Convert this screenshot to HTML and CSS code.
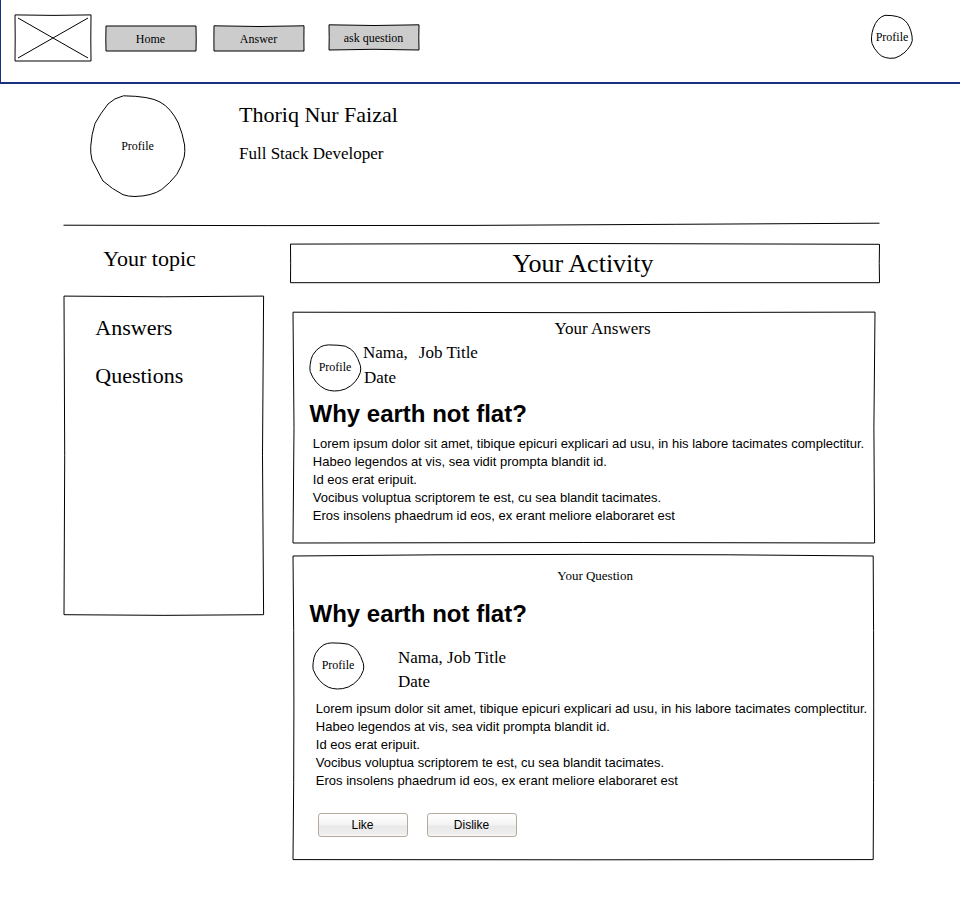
FILE: index.html
```html
<!DOCTYPE html>
<html lang="en">
<head>
<meta charset="utf-8">
<title>Profile</title>
<link rel="stylesheet" href="styles.css">
</head>
<body>
<header class="topbar">
  <svg class="logo" viewBox="0 0 78 48"><path d="M1 .9Q39 1.9 77 .9Q76.6 24 77 47H1Q1.4 24 1 .9ZM4 4L74 44M74 4L4 44"/></svg>
  <nav class="nav">
    <a class="nav-item"><svg class="frame" viewBox="0 0 92 28"><path d="M1 1H91Q91.4 14 91 26H1Q.6 14 1 1Z"/></svg><span>Home</span></a>
    <a class="nav-item"><svg class="frame" viewBox="0 0 92 28"><path d="M1 .8Q46 2.2 91 .8Q90.8 14 91 26H1Q.8 14 1 .8Z"/></svg><span>Answer</span></a>
    <a class="nav-item ask"><svg class="frame" viewBox="0 0 92 28"><path d="M1 .8Q46 2.2 91 .8Q90.6 14 91 26Q46 24.6 1 26Q1.4 14 1 .8Z"/></svg><span>ask question</span></a>
  </nav>
  <div class="avatar avatar-nav"><svg class="frame" viewBox="0 0 44 46"><path d="M15 1.3Q30 1.2 35 6.7Q40 11 42 22Q43.2 27 40.7 31Q35 40.5 25 44Q14 45.5 8.3 39.3Q3.5 34 2 29.3Q.5 23 3.3 14.3Q7 3.5 15 1.3Z"/></svg><span>Profile</span></div>
</header>
<main class="page">
  <section class="profile">
    <div class="avatar avatar-large"><svg class="frame" viewBox="0 0 96 103"><path d="M33.5 .8Q60 1.2 70 7Q81 13 88.3 28Q92.5 38 94.6 50Q95.2 57 94.2 62Q92 71 86.7 79.5Q80 88 71.7 94.5Q62 101 45 101.5Q38 101.5 33 99.7Q22 94 13 86L11.5 83.3L2 65Q.3 58 .7 51.5Q1.5 39 5 28.5Q10 19 18 9Q24 3 33.5 .8Z"/></svg><span>Profile</span></div>
    <div class="profile-info">
      <h1 class="name">Thoriq Nur Faizal</h1>
      <p class="role">Full Stack Developer</p>
    </div>
  </section>
  <svg class="divider" viewBox="0 0 817 5"><path d="M.5 3.2Q205 3.9 409 3.4Q613 2.3 816.5 1.2"/></svg>
  <div class="columns">
    <aside class="sidebar">
      <h2 class="sidebar-title">Your topic</h2>
      <div class="topics">
        <svg class="frame" viewBox="0 0 202 322"><path d="M1 1.1Q101 2.4 200.6 1.1Q198.4 160 200.6 319.7Q101 321 1 319.7Q2.4 160 1 1.1Z"/></svg>
        <a class="topic">Answers</a>
        <a class="topic">Questions</a>
      </div>
    </aside>
    <div class="feed">
      <div class="feed-title"><svg class="frame" viewBox="0 0 590 41"><path d="M.5 1.1Q295 -.2 589.5 1.3Q589 20 589.5 39.7H.5Q.8 20 .5 1.1Z"/></svg><h2>Your Activity</h2></div>
      <article class="card answers">
        <svg class="frame" viewBox="0 0 584 233"><path d="M1 1.2Q292 2.2 583 1.1Q581 116 582.6 232Q292 231 1 232Q3 116 1 1.2Z"/></svg>
        <h3 class="card-label">Your Answers</h3>
        <div class="author">
          <div class="avatar"><svg class="frame" viewBox="0 0 53 48"><path d="M19.7 .9Q30 .9 36.3 2.2Q42 4.5 45.3 8.5Q49 14 51.3 21.3Q52.2 25 51.3 28.5Q49.5 33.5 46.3 37.5Q42 42.5 36.3 45Q30.5 47.2 25.3 47Q20 46.8 16.3 45.2Q11 42.5 7.3 38.2Q3 33 1.2 27.5Q.6 24 1.2 20.5Q1.8 15 3.6 11.3Q7 5.5 12 2.6Q15.5 1 19.7 .9Z"/></svg><span>Profile</span></div>
          <div class="author-info"><p class="author-line"><span>Nama,</span><span>Job Title</span></p><p class="date">Date</p></div>
        </div>
        <h2 class="question">Why earth not flat?</h2>
        <p class="body">Lorem ipsum dolor sit amet, tibique epicuri explicari ad usu, in his labore tacimates complectitur.<br>Habeo legendos at vis, sea vidit prompta blandit id.<br>Id eos erat eripuit.<br>Vocibus voluptua scriptorem te est, cu sea blandit tacimates.<br>Eros insolens phaedrum id eos, ex erant meliore elaboraret est</p>
      </article>
      <article class="card asked">
        <svg class="frame" viewBox="0 0 584 307"><path d="M1 2Q291 -1.2 581.2 2Q582.2 150 581.2 305.6Q291 306 1 305.6Q2.8 150 1 2Z"/></svg>
        <h3 class="card-label">Your Question</h3>
        <h2 class="question">Why earth not flat?</h2>
        <div class="author">
          <div class="avatar"><svg class="frame" viewBox="0 0 53 48"><path d="M19.7 .9Q30 .9 36.3 2.2Q42 4.5 45.3 8.5Q49 14 51.3 21.3Q52.2 25 51.3 28.5Q49.5 33.5 46.3 37.5Q42 42.5 36.3 45Q30.5 47.2 25.3 47Q20 46.8 16.3 45.2Q11 42.5 7.3 38.2Q3 33 1.2 27.5Q.6 24 1.2 20.5Q1.8 15 3.6 11.3Q7 5.5 12 2.6Q15.5 1 19.7 .9Z"/></svg><span>Profile</span></div>
          <div class="author-info"><p>Nama, Job Title</p><p>Date</p></div>
        </div>
        <p class="body">Lorem ipsum dolor sit amet, tibique epicuri explicari ad usu, in his labore tacimates complectitur.<br>Habeo legendos at vis, sea vidit prompta blandit id.<br>Id eos erat eripuit.<br>Vocibus voluptua scriptorem te est, cu sea blandit tacimates.<br>Eros insolens phaedrum id eos, ex erant meliore elaboraret est</p>
        <div class="actions"><button class="vote">Like</button><button class="vote">Dislike</button></div>
      </article>
    </div>
  </div>
</main>
</body>
</html>
```
FILE: styles.css
```css
* { box-sizing: border-box; }

body {
  margin: 0;
  background: #fff;
  color: #000;
  font-family: "Liberation Serif", serif;
}

h1, h2, h3, p { margin: 0; font-weight: normal; }

svg { fill: none; stroke: #000; stroke-width: 1; display: block; }

/* Hand-drawn outline laid behind a box's content */
.frame {
  position: absolute;
  inset: 0;
  width: 100%;
  height: 100%;
  overflow: visible;
  z-index: -1;
}

.topbar {
  display: flex;
  align-items: flex-start;
  height: 84px;
  padding: 14px 46px 0 13px;
  border-left: 1px solid #18307f;
  border-bottom: 2px solid #18307f;
}

.logo { width: 78px; height: 48px; }

.nav { display: flex; gap: 16px; margin: 11px 0 0 13px; }

.nav-item {
  position: relative;
  z-index: 0;
  width: 92px;
  height: 28px;
  padding-right: 1px;
  line-height: 28px;
  font-size: 12px;
  text-align: center;
}

.nav-item .frame { fill: #ccc; }

.nav-item.ask { margin: -1px 0 0 7px; }

.avatar {
  position: relative;
  z-index: 0;
  flex: none;
  width: 53px;
  height: 48px;
  padding-right: 1px;
  line-height: 46px;
  font-size: 12px;
  text-align: center;
}

.avatar-nav { width: 44px; height: 46px; padding: 0; line-height: 46px; margin-left: auto; }

.avatar-large { width: 96px; height: 103px; line-height: 102px; }

.page { width: 880px; padding-left: 63px; }

.profile { display: flex; height: 138px; padding: 11px 0 0 27px; }

.profile-info { margin: 5px 0 0 53px; }

.name { font-size: 22px; line-height: 30px; }

.role { margin-top: 12px; font-size: 17px; line-height: 24px; }

.divider { width: 817px; height: 5px; }

.columns { display: flex; gap: 25px; }

.sidebar { width: 202px; padding-top: 17px; }

.sidebar-title { padding-left: 40.3px; font-size: 22px; line-height: 30px; }

.topics {
  position: relative;
  z-index: 0;
  display: flex;
  flex-direction: column;
  gap: 18px;
  height: 322px;
  margin-top: 21px;
  padding: 18px 0 0 32.3px;
}

.topic { font-size: 22px; line-height: 30px; }

.feed { width: 590px; padding-top: 16px; }

.feed-title {
  position: relative;
  z-index: 0;
  height: 41px;
  padding-right: 4px;
  text-align: center;
}

.feed-title h2 { font-size: 26px; line-height: 42px; }

.card { position: relative; z-index: 0; width: 584px; margin-left: 2px; }

.answers { height: 233px; margin-top: 27px; padding: 6px 0 0 17px; }

.asked { height: 307px; margin-top: 10px; padding: 13px 0 0 17px; }

.card-label { padding-left: 245.5px; font-size: 17px; line-height: 24px; }

.asked .card-label { margin-bottom: 14px; padding-left: 248.3px; font-size: 13px; line-height: 18px; }

.author { display: flex; font-size: 17px; line-height: 24px; }

.answers .author { height: 58px; }

.answers .avatar { margin-top: 3px; }

.answers .author-info { margin-left: 1px; }

.author-line { display: flex; gap: 11px; }

.date { margin: 1px 0 0 1px; }

.asked .author { height: 57px; padding: 13px 0 0 3px; }

.asked .author-info { margin: 4px 0 0 33px; }

.question {
  padding-left: .5px;
  font: bold 24px/30px "Liberation Sans", sans-serif;
}

.body {
  font: 13px/18px "Liberation Sans", sans-serif;
  white-space: nowrap;
}

.answers .body { padding: 6px 0 0 3.8px; }

.asked .body { padding-left: 6.8px; margin-top: 14px; }

.actions { display: flex; gap: 19px; margin: 23px 0 0 9px; }

.vote {
  width: 90px;
  height: 24px;
  padding: 0 1px 0 0;
  border: 1px solid #b5aa9c;
  border-radius: 3px;
  background: linear-gradient(#fff 0%, #f3f3f3 50%, #e8e8e8 55%, #eee 90%, #fafafa 100%);
  color: #000;
  font: 12px/22px "Liberation Sans", sans-serif;
}
```
